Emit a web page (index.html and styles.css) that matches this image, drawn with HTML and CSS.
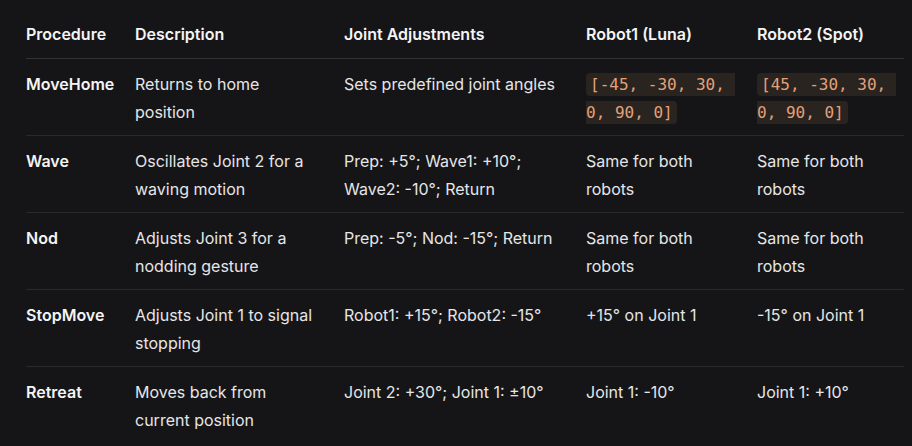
FILE: index.html
```html
<!DOCTYPE html>
<html>
<head>
<meta charset="utf-8">
<link rel="stylesheet" href="styles.css">
</head>
<body>
<div class="wrap">
<table class="tbl">
<colgroup>
<col class="c1"><col class="c2"><col class="c3"><col class="c4"><col class="c5">
</colgroup>
<thead>
<tr><th>Procedure</th><th>Description</th><th>Joint Adjustments</th><th>Robot1 (Luna)</th><th>Robot2 (Spot)</th></tr>
</thead>
<tbody>
<tr><td class="name">MoveHome</td><td>Returns to home position</td><td>Sets predefined joint angles</td><td><code class="code">[-45, -30, 30,&nbsp;<wbr>0, 90, 0]</code></td><td><code class="code">[45, -30, 30,&nbsp;<wbr>0, 90, 0]</code></td></tr>
<tr><td class="name">Wave</td><td>Oscillates Joint 2 for a waving motion</td><td>Prep: +5°; Wave1: +10°; Wave2: -10°; Return</td><td>Same for both robots</td><td>Same for both robots</td></tr>
<tr><td class="name">Nod</td><td>Adjusts Joint 3 for a nodding gesture</td><td>Prep: -5°; Nod: -15°; Return</td><td>Same for both robots</td><td>Same for both robots</td></tr>
<tr><td class="name">StopMove</td><td>Adjusts Joint 1 to signal stopping</td><td>Robot1: +15°; Robot2: -15°</td><td>+15° on Joint 1</td><td>-15° on Joint 1</td></tr>
<tr><td class="name">Retreat</td><td>Moves back from current position</td><td>Joint 2: +30°; Joint 1: ±10°</td><td>Joint 1: -10°</td><td>Joint 1: +10°</td></tr>
</tbody>
</table>
</div>
</body>
</html>
```

FILE: styles.css
```css
html, body {
  margin: 0;
  padding: 0;
  background: #151517;
}
.wrap {
  padding: 10px 8px 0 26px;
  font-family: Inter, "Noto Sans", sans-serif;
  font-size: 16px;
  line-height: 28px;
  color: #e6e6e8;
}
.tbl {
  width: 878px;
  table-layout: fixed;
  border-collapse: collapse;
}
.c1 { width: 109px; }
.c2 { width: 209px; }
.c3 { width: 242px; }
.c4 { width: 171px; }
.c5 { width: 147px; }
.tbl th, .tbl td {
  text-align: left;
  vertical-align: top;
  padding: 10px 20px 10px 0;
}
.tbl td {
  padding-top: 11px;
  padding-bottom: 9px;
}
.tbl th:nth-child(2), .tbl td:nth-child(2) {
  padding-right: 26px;
}
.tbl th:last-child, .tbl td:last-child {
  padding-right: 0;
}
.tbl th {
  font-weight: 600;
  color: #f4f4f5;
  border-bottom: 1px solid #333336;
}
.tbl tbody tr {
  border-bottom: 1px solid #2a2a2d;
}
.tbl tbody tr:last-child {
  border-bottom: none;
}
.tbl td.name {
  font-weight: 600;
  color: #f4f4f5;
}
.code {
  font-family: "DejaVu Sans Mono", "Liberation Mono", monospace;
  font-size: 16px;
  line-height: 18px;
  color: #e3a07a;
  background: #29241f;
  border-radius: 4px;
  padding: 2px 4px;
  -webkit-box-decoration-break: slice;
  box-decoration-break: slice;
}
```
